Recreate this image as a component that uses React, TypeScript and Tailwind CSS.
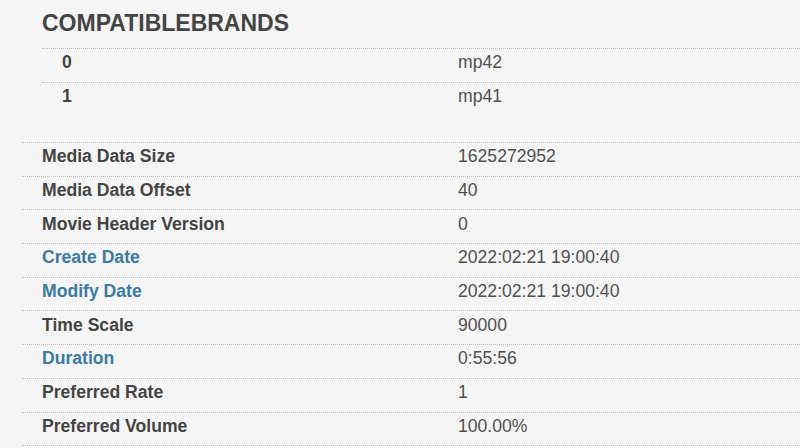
const brands = [
  { k: "0", v: "mp42" },
  { k: "1", v: "mp41" },
];

const rows = [
  { k: "Media Data Size", v: "1625272952" },
  { k: "Media Data Offset", v: "40" },
  { k: "Movie Header Version", v: "0" },
  { k: "Create Date", v: "2022:02:21 19:00:40", link: true },
  { k: "Modify Date", v: "2022:02:21 19:00:40", link: true },
  { k: "Time Scale", v: "90000" },
  { k: "Duration", v: "0:55:56", link: true },
  { k: "Preferred Rate", v: "1" },
  { k: "Preferred Volume", v: "100.00%" },
];

export default function App() {
  return (
    <div className="h-[448px] w-[800px] overflow-hidden bg-[#f5f5f5] pl-[22px] font-['Liberation_Sans',Arial,sans-serif] text-[17.6px] text-[#444]">
      {/* compatible brands */}
      <h2 className="ml-5 pt-[8px] text-[23px] font-bold leading-[30px] text-[#444]">
        COMPATIBLEBRANDS
      </h2>
      <div className="ml-5 mt-[10px]">
        {brands.map((b) => (
          <div
            key={b.k}
            className="grid h-[34px] grid-cols-[416px_1fr] items-center border-t border-dotted border-[#bdbdbd] pb-[6px]"
          >
            <span className="pl-5 font-bold">{b.k}</span>
            <span className="text-[#505050]">{b.v}</span>
          </div>
        ))}
      </div>

      {/* movie header */}
      <div className="mt-[26px]">
        {rows.map((r) => (
          <div
            key={r.k}
            className="grid h-[33.7px] grid-cols-[436px_1fr] items-center border-t border-dotted border-[#bdbdbd] pb-[6px]"
          >
            <span className={"pl-5 font-bold " + (r.link ? "text-[#3a7aa3]" : "text-[#444]")}>
              {r.k}
            </span>
            <span className="text-[#505050]">{r.v}</span>
          </div>
        ))}
        <div className="border-t border-dotted border-[#bdbdbd]" />
      </div>
    </div>
  );
}
